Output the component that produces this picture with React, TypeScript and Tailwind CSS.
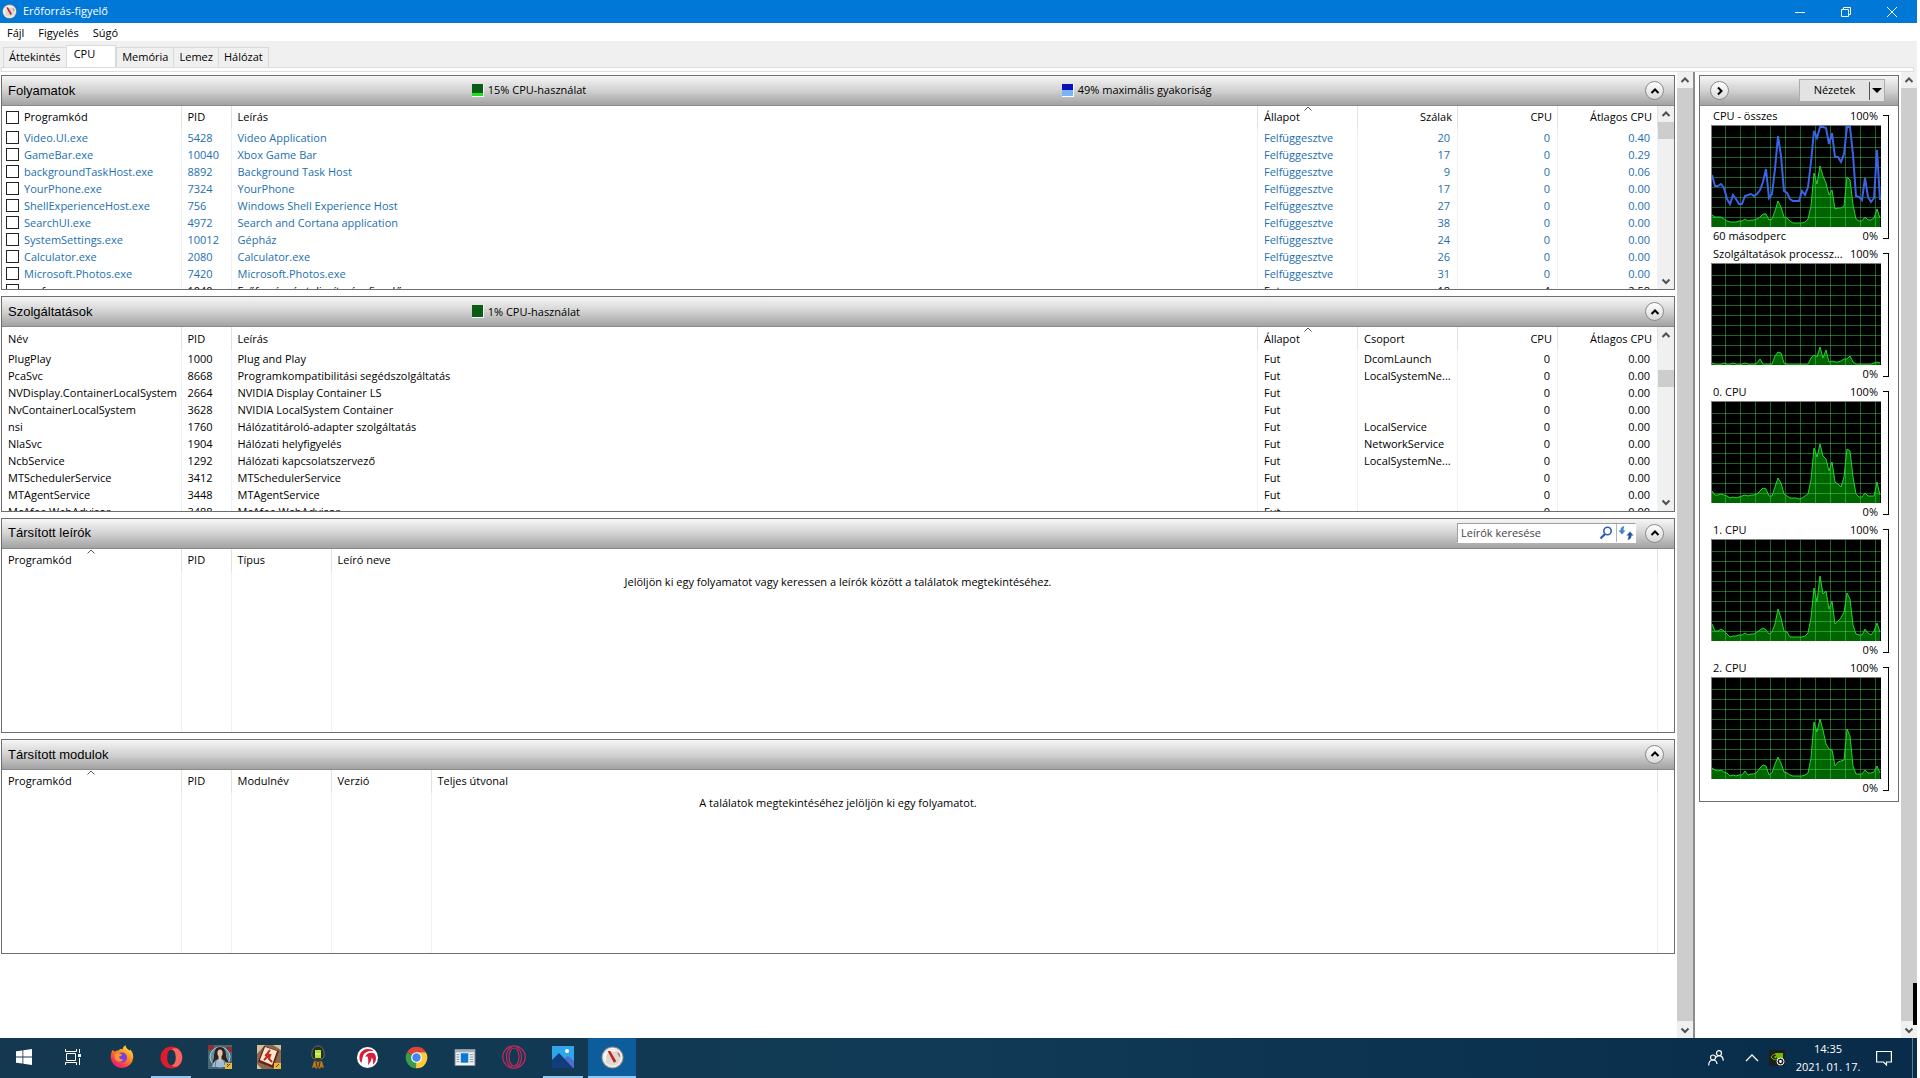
import { useState } from "react";
import type { ReactNode } from "react";
import clsx from "clsx";

type Column = {
  label: string;
  width?: string;
  right?: boolean;
  sorted?: boolean;
};

const PROCESS_COLUMNS: Column[] = [
  { label: "Programkód", width: "w-[179px]" },
  { label: "PID", width: "w-[50px]" },
  { label: "Leírás" },
  { label: "Állapot", width: "w-[100px]", sorted: true },
  { label: "Szálak", width: "w-[100px]", right: true },
  { label: "CPU", width: "w-[100px]", right: true },
  { label: "Átlagos CPU", width: "w-[100px]", right: true },
];

const PROCESSES = [
  ["Video.UI.exe", "5428", "Video Application", "Felfüggesztve", "20", "0", "0.40"],
  ["GameBar.exe", "10040", "Xbox Game Bar", "Felfüggesztve", "17", "0", "0.29"],
  ["backgroundTaskHost.exe", "8892", "Background Task Host", "Felfüggesztve", "9", "0", "0.06"],
  ["YourPhone.exe", "7324", "YourPhone", "Felfüggesztve", "17", "0", "0.00"],
  ["ShellExperienceHost.exe", "756", "Windows Shell Experience Host", "Felfüggesztve", "27", "0", "0.00"],
  ["SearchUI.exe", "4972", "Search and Cortana application", "Felfüggesztve", "38", "0", "0.00"],
  ["SystemSettings.exe", "10012", "Gépház", "Felfüggesztve", "24", "0", "0.00"],
  ["Calculator.exe", "2080", "Calculator.exe", "Felfüggesztve", "26", "0", "0.00"],
  ["Microsoft.Photos.exe", "7420", "Microsoft.Photos.exe", "Felfüggesztve", "31", "0", "0.00"],
  ["perfmon.exe", "1040", "Erőforrás- és teljesítményfigyelő", "Fut", "18", "4", "2.58"],
];

const SERVICE_COLUMNS: Column[] = [
  { label: "Név", width: "w-[179px]" },
  { label: "PID", width: "w-[50px]" },
  { label: "Leírás" },
  { label: "Állapot", width: "w-[100px]", sorted: true },
  { label: "Csoport", width: "w-[100px]" },
  { label: "CPU", width: "w-[100px]", right: true },
  { label: "Átlagos CPU", width: "w-[100px]", right: true },
];

const SERVICES = [
  ["PlugPlay", "1000", "Plug and Play", "Fut", "DcomLaunch", "0", "0.00"],
  ["PcaSvc", "8668", "Programkompatibilitási segédszolgáltatás", "Fut", "LocalSystemNe...", "0", "0.00"],
  ["NVDisplay.ContainerLocalSystem", "2664", "NVIDIA Display Container LS", "Fut", "", "0", "0.00"],
  ["NvContainerLocalSystem", "3628", "NVIDIA LocalSystem Container", "Fut", "", "0", "0.00"],
  ["nsi", "1760", "Hálózatitároló-adapter szolgáltatás", "Fut", "LocalService", "0", "0.00"],
  ["NlaSvc", "1904", "Hálózati helyfigyelés", "Fut", "NetworkService", "0", "0.00"],
  ["NcbService", "1292", "Hálózati kapcsolatszervező", "Fut", "LocalSystemNe...", "0", "0.00"],
  ["MTSchedulerService", "3412", "MTSchedulerService", "Fut", "", "0", "0.00"],
  ["MTAgentService", "3448", "MTAgentService", "Fut", "", "0", "0.00"],
  ["McAfee WebAdvisor", "3488", "McAfee WebAdvisor", "Fut", "", "0", "0.00"],
];

const HANDLE_COLUMNS: Column[] = [
  { label: "Programkód", width: "w-[179px]", sorted: true },
  { label: "PID", width: "w-[50px]" },
  { label: "Típus", width: "w-[100px]" },
  { label: "Leíró neve" },
];

const MODULE_COLUMNS: Column[] = [
  { label: "Programkód", width: "w-[179px]", sorted: true },
  { label: "PID", width: "w-[50px]" },
  { label: "Modulnév", width: "w-[100px]" },
  { label: "Verzió", width: "w-[100px]" },
  { label: "Teljes útvonal" },
];

// One sample per second, in percent
const FREQUENCY = [
  51, 40, 40, 42, 38, 27, 22, 31, 27, 22, 22, 30, 31, 32, 30, 32, 36, 44, 57, 28, 32, 57, 90, 70, 35, 33, 27, 25, 25,
  25, 35, 31, 39, 64, 95, 88, 99, 99, 98, 82, 93, 69, 69, 64, 72, 99, 99, 71, 30, 29, 26, 48, 29, 24, 28, 76, 26,
];
const TOTAL = [
  11, 9, 9, 9, 7, 5, 4, 4, 4, 5, 5, 7, 5, 6, 6, 7, 9, 12, 12, 6, 7, 15, 25, 19, 9, 8, 5, 3, 3, 3, 3, 4, 7, 20, 53, 42,
  60, 50, 43, 31, 36, 17, 18, 18, 20, 49, 46, 21, 7, 5, 5, 9, 6, 6, 8, 17, 8,
];
const SERVICE_LOAD = [
  1, 0, 0, 0, 1, 0, 0, 1, 0, 0, 0, 1, 0, 0, 0, 1, 5, 0, 0, 0, 0, 8, 12, 11, 1, 0, 0, 0, 0, 0, 0, 0, 0, 6, 9, 7, 17, 6,
  14, 2, 3, 2, 2, 3, 5, 5, 8, 2, 0, 0, 0, 0, 0, 0, 1, 2, 1,
];
const CPU0 = [
  11, 7, 7, 8, 7, 6, 4, 5, 4, 5, 6, 7, 6, 7, 7, 8, 11, 14, 13, 6, 6, 15, 24, 19, 8, 6, 4, 4, 4, 3, 4, 6, 8, 22, 54, 45,
  58, 46, 43, 31, 40, 20, 18, 15, 25, 53, 51, 25, 8, 5, 5, 9, 6, 6, 6, 20, 7,
];
const CPU1 = [
  16, 9, 9, 11, 9, 6, 3, 4, 4, 5, 5, 7, 5, 6, 6, 8, 10, 12, 10, 6, 8, 16, 31, 22, 9, 8, 3, 3, 3, 3, 3, 4, 7, 22, 52,
  38, 64, 46, 49, 31, 39, 16, 19, 22, 28, 47, 41, 15, 6, 5, 5, 11, 7, 5, 9, 17, 8,
];
const CPU2 = [
  10, 8, 7, 8, 6, 5, 2, 3, 2, 3, 3, 7, 3, 4, 4, 6, 10, 13, 12, 3, 5, 14, 21, 15, 6, 5, 3, 2, 2, 2, 2, 3, 5, 20, 56, 46,
  59, 48, 34, 29, 28, 12, 16, 17, 18, 49, 42, 12, 4, 4, 4, 8, 5, 5, 6, 12, 5,
];

const GRAPHS = [
  { title: "CPU - összes", footer: "60 másodperc", usage: TOTAL, frequency: FREQUENCY },
  { title: "Szolgáltatások processz...", footer: "", usage: SERVICE_LOAD },
  { title: "0. CPU", footer: "", usage: CPU0 },
  { title: "1. CPU", footer: "", usage: CPU1 },
  { title: "2. CPU", footer: "", usage: CPU2 },
];

function Gauge({ className }: { className: string }) {
  return (
    <svg viewBox="0 0 24 24" className={className} aria-hidden="true">
      <circle cx="12" cy="12" r="11.5" fill="#8d8a86" />
      <circle cx="12" cy="12" r="10.5" fill="#f1efec" />
      <circle cx="12" cy="12" r="8.5" fill="#ddd8d2" />
      <path d="M5 15a7.300 7.300 0 0 1 10-9.500" fill="none" stroke="#fff" strokeWidth="1.500" />
      <path d="M17.500 7a7.300 7.300 0 0 1 2 4" fill="none" stroke="#c0694f" strokeWidth="1.500" />
      <path d="M7 5.500 9.500 5l6.500 11-2.500 1.500z" fill="#c4201c" />
    </svg>
  );
}

function Chevron({ dir, className }: { dir: "up" | "down" | "right"; className?: string }) {
  const d = { up: "M1.500 7 5 3.500 8.500 7", down: "M1.500 3.500 5 7l3.500-3.500", right: "M3 1.500 6.500 5 3 8.500" }[dir];
  return (
    <svg viewBox="0 0 10 10" className={clsx("h-[10px] w-[10px]", className)} aria-hidden="true">
      <path d={d} fill="none" stroke="currentColor" strokeWidth="2" />
    </svg>
  );
}

function RoundButton({ dir, label }: { dir: "up" | "right"; label: string }) {
  return (
    <button
      aria-label={label}
      className="flex h-[19px] w-[19px] shrink-0 items-center justify-center rounded-full border border-[#8a8a8a] bg-gradient-to-b from-white to-[#d9d9d9] text-black"
    >
      <Chevron dir={dir} />
    </button>
  );
}

function ScrollBar({ thumb }: { thumb: string }) {
  return (
    <div className="flex w-4 shrink-0 flex-col bg-[#f0f0f0] text-[#505050]">
      <button aria-label="Görgetés fel" className="flex h-4 shrink-0 items-center justify-center">
        <Chevron dir="up" />
      </button>
      <div className="flex min-h-0 flex-1 flex-col">
        <div className={clsx("bg-[#cdcdcd]", thumb)} />
      </div>
      <button aria-label="Görgetés le" className="flex h-[17px] shrink-0 items-center justify-center">
        <Chevron dir="down" />
      </button>
    </div>
  );
}

function Panel({ title, header, children }: { title: string; header?: ReactNode; children: ReactNode }) {
  return (
    <section className="flex min-h-0 flex-1 flex-col border border-[#6e6e6e] bg-white">
      <div className="flex h-[30px] shrink-0 items-center border-b border-[#8a8a8a] bg-gradient-to-b from-[#f6f6f6] via-[#d2d2d2] to-[#a2a2a2] pr-[10px] pl-[6px]">
        <h2 className="w-[28%] shrink-0 font-['Liberation_Sans',sans-serif] text-[13px]">{title}</h2>
        <div className="flex min-w-0 flex-1 items-center">{header}</div>
        <RoundButton dir="up" label="Összecsukás" />
      </div>
      <div className="relative flex min-h-0 flex-1 overflow-hidden">{children}</div>
    </section>
  );
}

function Legend({ swatch, fill, children }: { swatch: string; fill: string; children: ReactNode }) {
  return (
    <div className="flex w-[590px] shrink-0 items-center gap-1">
      <span className={clsx("flex h-[13px] w-[12px] flex-col justify-end border-r border-b border-white", swatch)}>
        <span className={fill} />
      </span>
      {children}
    </div>
  );
}

function HeadCell({ column, children }: { column: Column; children?: ReactNode }) {
  return (
    <th
      className={clsx(
        "relative h-[23px] border-r border-[#e2e2e2] pr-[5px] pl-[6px] font-normal whitespace-nowrap",
        column.right ? "text-right" : "text-left",
        column.width,
      )}
    >
      {column.sorted && (
        <svg viewBox="0 0 8 5" className="absolute top-0 left-1/2 h-[5px] w-2 -translate-x-1/2" aria-hidden="true">
          <path d="M.5 4.500 4 1l3.500 3.500" fill="none" stroke="#555" />
        </svg>
      )}
      <span className="flex items-center gap-[5px]">
        {children}
        <span className="flex-1">{column.label}</span>
      </span>
    </th>
  );
}

const CHECKBOX = "-ml-[2px] h-[13px] w-[13px] shrink-0 appearance-none border border-[#222] bg-white checked:bg-[#0078d7]";

function DataTable({ columns, rows, selectable }: { columns: Column[]; rows: string[][]; selectable?: boolean }) {
  return (
    <div className="min-w-0 flex-1 overflow-hidden">
      <table className="w-full table-fixed border-collapse">
        <thead>
          <tr>
            {columns.map((c, i) => (
              <HeadCell key={c.label} column={c}>
                {selectable && i === 0 && (
                  <input type="checkbox" aria-label="Összes kijelölése" className={CHECKBOX} />
                )}
              </HeadCell>
            ))}
          </tr>
        </thead>
        <tbody>
          {rows.map((row) => (
            <tr key={row[0]} className={row[3] === "Felfüggesztve" ? "text-[#1c6fb0]" : "text-black"}>
              {row.map((value, i) => (
                <td
                  key={i}
                  className={clsx(
                    "h-[17px] border-r border-[#eef1f5] pl-[6px] leading-[17px] whitespace-nowrap",
                    columns[i].right ? "pr-[7px] text-right" : "pr-0",
                  )}
                >
                  {selectable && i === 0 ? (
                    <label className="flex items-center gap-[5px]">
                      <input type="checkbox" className={CHECKBOX} />
                      {value}
                    </label>
                  ) : (
                    value
                  )}
                </td>
              ))}
            </tr>
          ))}
        </tbody>
      </table>
    </div>
  );
}

function EmptyTable({ columns, message }: { columns: Column[]; message: string }) {
  return (
    <>
      <table className="mr-4 h-full w-full table-fixed border-collapse">
        <thead>
          <tr>
            {columns.map((c) => (
              <HeadCell key={c.label} column={c} />
            ))}
          </tr>
        </thead>
        <tbody>
          <tr>
            {columns.map((c) => (
              <td key={c.label} className="border-r border-[#f0f0f0]" />
            ))}
          </tr>
        </tbody>
      </table>
      <p className="absolute inset-x-0 top-[23px] text-center leading-[20px]">{message}</p>
    </>
  );
}

function HandleSearch() {
  return (
    <div className="mr-[9px] ml-auto flex h-5 w-[179px] border border-[#a0a0a0] border-r-white border-b-white bg-white">
      <input
        type="text"
        aria-label="Leírók keresése"
        placeholder="Leírók keresése"
        className="min-w-0 flex-1 pl-[3px] text-[11px] outline-none placeholder:text-[#444]"
      />
      <button aria-label="Keresés" className="flex w-5 items-center justify-center">
        <svg viewBox="0 0 14 14" className="h-[14px] w-[14px]" fill="none" stroke="#2c62ad" aria-hidden="true">
          <circle cx="8.500" cy="5" r="3.700" strokeWidth="1.600" />
          <path d="M6 8 1.500 12.500" strokeWidth="2.400" />
        </svg>
      </button>
      <button aria-label="Frissítés" className="flex w-[19px] items-center justify-center border-l border-[#b4b4b4]">
        <svg viewBox="0 0 16 14" className="h-[14px] w-4" aria-hidden="true">
          <path d="M6.500 0C3.700.3 2.500 2 2.500 4.500H.5L4 8.500l3.500-4h-2c0-2 .3-3 1-4.500z" fill="#3f86cf" />
          <path d="M9.500 14c2.800-.3 4-2 4-4.500h2L12 5.500l-3.500 4h2c0 2-.3 3-1 4.500z" fill="#2559a6" />
        </svg>
      </button>
    </div>
  );
}

const toPoints = (samples: number[]) => samples.map((v, i) => `${i * 3},${100 - v}`).join(" ");

function Graph({ title, footer, usage, frequency }: { title: string; footer: string; usage: number[]; frequency?: number[] }) {
  return (
    <div className="flex h-[138px] gap-[2px] leading-[18px]">
      <div className="flex w-[170px] flex-col">
        <div className="flex justify-between pr-[3px] pl-[2px]">
          <span className="whitespace-nowrap">{title}</span>
          <span>100%</span>
        </div>
        <svg viewBox="0 0 169 101" className="h-[102px] w-[170px] border-t border-l border-[#808080] bg-black">
          <polygon points={`0,101 ${toPoints(usage)} 168,101`} fill="#006400" />
          <g stroke="#4dff6a" strokeOpacity="0.38" shapeRendering="crispEdges">
            {Array.from({ length: 11 }, (_, i) => (
              <line key={i} x1={13.5 + i * 15} x2={13.5 + i * 15} y1="0" y2="101" />
            ))}
            {Array.from({ length: 9 }, (_, i) => (
              <line key={i} x1="0" x2="169" y1={11.5 + i * 10} y2={11.5 + i * 10} />
            ))}
          </g>
          <polyline points={toPoints(usage)} fill="none" stroke="#22d62a" />
          {frequency && <polyline points={toPoints(frequency)} fill="none" stroke="#3a63e8" strokeWidth="2" />}
        </svg>
        <div className="flex justify-between pr-[3px] pl-[2px]">
          <span>{footer}</span>
          <span>0%</span>
        </div>
      </div>
      <div className="mt-2 mb-[6px] w-[6px] border border-l-0 border-black" />
    </div>
  );
}

function Sidebar() {
  return (
    <aside className="w-[200px] shrink-0 self-start border border-[#6e6e6e] bg-white pb-[4px]">
      <div className="flex h-[30px] items-center border-b border-[#8a8a8a] bg-gradient-to-b from-[#f6f6f6] via-[#d2d2d2] to-[#a2a2a2] pr-[13px] pl-[10px]">
        <RoundButton dir="right" label="Grafikonok elrejtése" />
        <button className="ml-auto flex h-[23px] w-[86px] items-center border border-[#adadad] bg-[#e3e3e3]">
          <span className="flex-1 text-center">Nézetek</span>
          <span className="flex h-[18px] w-[15px] items-center justify-center border-l border-[#555]">
            <svg viewBox="0 0 10 5" className="h-[5px] w-[10px]" aria-hidden="true">
              <path d="M0 0h10L5 5z" />
            </svg>
          </span>
        </button>
      </div>
      <div className="pt-px pl-[11px]">
        {GRAPHS.map((g) => (
          <Graph key={g.title} {...g} />
        ))}
      </div>
    </aside>
  );
}

const TABS = ["Áttekintés", "CPU", "Memória", "Lemez", "Hálózat"];

function Tabs() {
  const [active, setActive] = useState("CPU");
  return (
    <div className="h-[31px] shrink-0 bg-[#f0f0f0] pt-[4px]">
      <div role="tablist" className="flex h-[22px] items-end pl-[3px]">
        {TABS.map((tab) => (
          <button
            key={tab}
            role="tab"
            aria-selected={tab === active}
            onClick={() => setActive(tab)}
            className={clsx(
              "border border-b-0 border-[#d9d9d9]",
              tab === active ? "h-[22px] bg-white pr-[20px] pb-1 pl-[7px]" : "-mr-px h-5 bg-[#f0f0f0] px-[5px]",
            )}
          >
            {tab}
          </button>
        ))}
      </div>
      <div className="mr-[3px] ml-px h-[5px] border border-[#dcdcdc] bg-white" />
    </div>
  );
}

function FirefoxIcon() {
  return (
    <svg viewBox="0 0 24 24" className="h-6 w-6">
      <defs>
        <linearGradient id="fox" x1="0.9" y1="0" x2="0.2" y2="1">
          <stop offset="0" stopColor="#fff04a" />
          <stop offset="0.45" stopColor="#ff8a1e" />
          <stop offset="0.8" stopColor="#f5315c" />
          <stop offset="1" stopColor="#d61c8b" />
        </linearGradient>
      </defs>
      <path
        d="M2.500 5c1 .5 1.700 1 2.300 1.800C6 5.800 7 5.500 8.500 5.600 10 4 11.500 3.800 12.500 4.500 13 2.500 14 1 15.500.3c.3 2 1.200 3 3 4.500C20 6 20.300 5.500 20.300 4.500 22.600 7 23.500 10 23.200 13A11.300 11.300 0 0 1 .8 13.500C.5 10 1.200 7.500 2.500 5z"
        fill="url(#fox)"
      />
      <circle cx="12" cy="12.500" r="5" fill="#7a3fe0" />
      <path d="M5 9c3-1.500 5-.5 7 .5-.5 1.500-2 1.700-3 2 .3 2.500 2.500 3.500 4.500 2.700-1.500 3-6.500 3.300-8.300-.2C4.500 12.500 4.500 10.500 5 9z" fill="#ff9a28" />
    </svg>
  );
}

function ChromeIcon() {
  return (
    <svg viewBox="0 0 24 24" className="h-[23px] w-[23px]">
      <path d="M12 12 2.200 6.400A11.300 11.300 0 0 1 21.800 6.400H12z" fill="#e0453a" />
      <path d="M12 12 2.200 6.400A11.300 11.300 0 0 0 11.500 23.300L17 14.500z" fill="#3c9c4c" />
      <path d="M12 12V6.400h9.800A11.300 11.300 0 0 1 11.500 23.300z" fill="#fbcb3b" />
      <circle cx="12" cy="12" r="5.600" fill="#fff" />
      <circle cx="12" cy="12" r="4.400" fill="#4285f4" />
    </svg>
  );
}

const TASKS: { name: string; icon: ReactNode; state?: "running" | "active" }[] = [
  {
    name: "Start",
    icon: (
      <svg viewBox="0 0 16 16" className="h-4 w-4" fill="#fff">
        <path d="M0 2.300 6.500 1.400V7.600H0zM7.300 1.300 16 0v7.600H7.300zM0 8.400h6.500v6.200L0 13.700zM7.300 8.400H16V16l-8.700-1.300z" />
      </svg>
    ),
  },
  {
    name: "Feladatnézet",
    icon: (
      <svg viewBox="0 0 16 16" className="h-4 w-4" fill="none" stroke="#fff">
        <path d="M.5 0v2.500h11V0M.5 16v-2.500h11V16M1.500 4.500h9v7h-9zM14.500 0v4M14.500 9v7" />
        <path d="M13 6.500h3" strokeWidth="3" />
      </svg>
    ),
  },
  { name: "Firefox", icon: <FirefoxIcon /> },
  {
    name: "Opera",
    state: "running",
    icon: (
      <svg viewBox="0 0 24 24" className="h-[23px] w-[23px]">
        <path d="M12 .5a11.500 11.500 0 0 0 0 23 11.500 11.500 0 0 0 0-23zm0 3.500c3 0 4.500 3.600 4.500 8s-1.500 8-4.500 8-4.500-3.600-4.500-8S9 4 12 4z" fill="#e01b2c" />
        <path d="M12 4c2-2 5.500-2 7.500-.3A11.500 11.500 0 0 1 19.500 20.300C17.500 22 14 22 12 20c3 0 4.500-3.600 4.500-8S15 4 12 4z" fill="#f4695f" />
      </svg>
    ),
  },
  {
    name: "Játék",
    icon: (
      <svg viewBox="0 0 24 24" className="h-6 w-6">
        <path fill="#4a6672" d="M0 0h24v24H0z" />
        <path fill="#8f2e33" d="M0 0h6v5H0zM18 2h6v5h-6z" />
        <circle cx="12" cy="12" r="10" fill="#5f8fa4" stroke="#b7c9cf" />
        <path d="M6 13c0-8 2-11 6-11s6 3 6 10l3 6-5-2H8l-4 3z" fill="#2b211f" />
        <ellipse cx="12" cy="8" rx="2.600" ry="3.500" fill="#e7c1a8" />
        <path d="M4 22c1-5 4-8 8-8s6 3 7 8z" fill="#9dbdd8" />
        <path d="M10.500 11h3v3L12 18l-1.500-4z" fill="#e7c1a8" />
        <path d="M8 15 7 22M16 15l1 5" stroke="#5c7894" />
        <path fill="#e8b93a" d="M17 18h7v6h-7z" />
        <path d="m19 22 3-3M19 19.500h1" stroke="#5a3c08" />
      </svg>
    ),
  },
  {
    name: "Mahjong",
    icon: (
      <svg viewBox="0 0 24 24" className="h-6 w-6">
        <path fill="#8a6a4d" d="M0 0h24v24H0z" />
        <path fill="#d6c097" d="M0 0h8L0 9zM16 0h8v5zM0 19l5 5H0z" />
        <path fill="#6d2219" d="m7 1 15 5-6 17L1 17z" />
        <path fill="#f5ead0" d="m8 2 12 4-5 14L3 15z" />
        <path d="m13 5-3 4 3 1-4 3-2 2M13 10l-1 4 3 3M8 10l2 1" stroke="#c3241b" strokeWidth="2" fill="none" />
        <path fill="#e8b93a" d="M17 18h7v6h-7z" />
        <path d="m19 22 3-3" stroke="#5a3c08" />
      </svg>
    ),
  },
  {
    name: "Kerbal",
    icon: (
      <svg viewBox="0 0 24 24" className="h-6 w-6">
        <path d="M6 12C5 5 8 1 12 1s7 4 6 11l-2 2H8z" fill="#252c22" stroke="#6b7065" />
        <path d="M9 5h6v8H9z" fill="#b8e23a" />
        <path d="M9 9h6" stroke="#e8ffa0" />
        <path d="M10 13h4v4h-4z" fill="#3c3a2c" />
        <path d="m8 16 4 1 4-1 2 7-3-1-1 2-2-2-2 2-1-2-3 1z" fill="#b8781d" />
        <path d="m10 17 1 5M14 17l-1 5" stroke="#4a2a08" />
      </svg>
    ),
  },
  {
    name: "Tűzfal",
    icon: (
      <svg viewBox="0 0 24 24" className="h-[23px] w-[23px]">
        <circle cx="12" cy="12" r="11" fill="#fff" />
        <path d="M5.500 18C1.500 12 4 4 11.500 3.200c3-.3 5.500.6 7 2.300C14 4.500 9 6 7.500 10c-1 2.600-1 5.500-2 8z" fill="#d61f3c" />
        <path d="M9.500 11.500C11 7.500 15.500 6 19.500 8c2.500 4 1.500 9-2 11.500.8-3 .5-5.500-1-7.500-.5 3-1.500 5.500-4 8 .5-3.500.5-6-.5-9-1 0-1.700 0-2.500.5z" fill="#d61f3c" />
      </svg>
    ),
  },
  { name: "Chrome", icon: <ChromeIcon /> },
  {
    name: "Hírek",
    icon: (
      <svg viewBox="0 0 22 18" className="h-[17px] w-[22px]">
        <path fill="#f4f4f4" stroke="#8a97a0" d="M.5.5h21v17H.5z" />
        <path fill="#9fb0bb" d="M1 1h20v2.500H1z" />
        <path fill="#0a78d7" d="M6.500 4.500h8v10h-8z" />
        <path d="M2 6h3M2 8.500h3M2 11h3M2 13.500h3M16 6h4M16 8.500h4M16 11h4M16 13.500h4" stroke="#7d8b94" />
      </svg>
    ),
  },
  {
    name: "Opera GX",
    icon: (
      <svg viewBox="0 0 24 24" className="h-6 w-6" fill="none" stroke="#c42a5c" strokeWidth="1.200">
        <circle cx="12" cy="12" r="11.200" />
        <ellipse cx="12" cy="12" rx="5" ry="9" />
        <path d="M10 1.500C5.500 4 4.500 8 4.500 12s1 8 5.500 10.500M14 1.500c4.500 2.500 5.500 6.500 5.500 10.500s-1 8-5.500 10.500" />
      </svg>
    ),
  },
  {
    name: "Fényképek",
    state: "running",
    icon: (
      <svg viewBox="0 0 22 22" className="h-[22px] w-[22px]">
        <path fill="#2fa5ea" d="M0 0h22v22H0z" />
        <path fill="#4f6fce" d="m9 15 7-5 6 5v7H9z" />
        <path fill="#123d7c" d="m0 14 7-7 14 15H0z" />
        <circle cx="15" cy="5" r="2" fill="#fff" />
      </svg>
    ),
  },
  { name: "Erőforrás-figyelő", state: "active", icon: <Gauge className="h-[23px] w-[23px]" /> },
];

function Taskbar() {
  return (
    <footer className="flex h-10 shrink-0 bg-gradient-to-r from-[#14384f] via-[#103a56] to-[#082c49] text-white">
      <nav className="flex gap-px">
        {TASKS.map((task) => (
          <button
            key={task.name}
            aria-label={task.name}
            className={clsx("flex w-12 flex-col items-center", task.state === "active" && "bg-[#0d5c9c]")}
          >
            <span className="flex h-[38px] items-center">{task.icon}</span>
            {task.state && (
              <span className={clsx("h-[2px] bg-[#8fc6f2]", task.state === "active" ? "w-full" : "w-10")} />
            )}
          </button>
        ))}
      </nav>
      <div className="ml-auto flex items-center">
        <button aria-label="Kapcsolatok" className="mr-[21px]">
          <svg viewBox="0 0 16 16" className="h-4 w-4" fill="none" stroke="#fff" strokeWidth="1.200">
            <circle cx="5" cy="7.500" r="2.500" />
            <path d="M.7 15.500c0-3.500 1.800-5.500 4.300-5.500s3.800 1.500 4 4" />
            <circle cx="11" cy="3.200" r="2.500" />
            <path d="M8 7.500c.8-1.200 1.700-1.800 3-1.800 2.500 0 4.200 1.800 4.200 5" />
          </svg>
        </button>
        <button aria-label="Rejtett ikonok" className="mr-[10px]">
          <svg viewBox="0 0 14 8" className="h-2 w-[14px]" fill="none" stroke="#fff" strokeWidth="1.300">
            <path d="m1 7 6-6 6 6" />
          </svg>
        </button>
        <button aria-label="NVIDIA" className="mr-[10px]">
          <svg viewBox="0 0 16 16" className="h-4 w-4">
            <path fill="#1d1f1d" d="M0 0h16v16H0z" />
            <path fill="#76b900" d="M6 3h8v8H9z" />
            <path d="M2 7c2.500-4 7-4 9 0-2.500 3.500-6.500 3.500-9 0z" fill="none" stroke="#76b900" />
            <circle cx="6.500" cy="7" r="1.200" fill="#76b900" />
            <circle cx="11.500" cy="11.500" r="3.500" fill="#1d1f1d" stroke="#fff" />
            <circle cx="11.500" cy="11.500" r="1.400" fill="#fff" />
          </svg>
        </button>
        <time className="w-[66px] text-center text-[11px] leading-[18px] whitespace-nowrap">
          14:35
          <br />
          2021. 01. 17.
        </time>
        <button aria-label="Műveletközpont" className="mr-[20px] ml-[15px]">
          <svg viewBox="0 0 16 16" className="h-4 w-4" fill="none" stroke="#fff" strokeWidth="1.200">
            <path d="M.6 1.500h14.800v10.500H10.500V15L7.500 12H.6z" />
          </svg>
        </button>
        <span className="mr-1 h-10 w-px bg-[#5f7d92]" />
      </div>
    </footer>
  );
}

export default function App() {
  return (
    <div className="flex h-screen flex-col overflow-hidden bg-white pr-[3px] font-['Open_Sans','Noto_Sans',sans-serif] text-[11px] text-black">
      <header className="flex h-[23px] shrink-0 items-center bg-[#0078d7] pr-[2px] pl-[2px] text-white">
        <Gauge className="mr-[6px] h-[15px] w-[15px]" />
        <h1>Erőforrás-figyelő</h1>
        <div className="ml-auto flex">
          <button aria-label="Kis méret" className="flex h-[21px] w-[46px] items-center justify-center">
            <svg viewBox="0 0 10 10" className="h-[10px] w-[10px]" stroke="#fff">
              <path d="M0 5.500h10" />
            </svg>
          </button>
          <button aria-label="Előző méret" className="flex h-[21px] w-[46px] items-center justify-center">
            <svg viewBox="0 0 10 10" className="h-[10px] w-[10px]" fill="none" stroke="#fff">
              <path d="M.5 2.500h7v7h-7zM2.500 2.500v-2h7v7h-2" />
            </svg>
          </button>
          <button aria-label="Bezárás" className="flex h-[21px] w-[46px] items-center justify-center">
            <svg viewBox="0 0 10 10" className="h-[10px] w-[10px]" stroke="#fff">
              <path d="m0 0 10 10M10 0 0 10" />
            </svg>
          </button>
        </div>
      </header>
      <nav className="flex h-[18px] shrink-0 items-center gap-[14px] pt-[2px] pl-[7px]">
        <button>Fájl</button>
        <button>Figyelés</button>
        <button>Súgó</button>
      </nav>
      <Tabs />

      <div className="flex min-h-0 flex-1">
        <main className="min-w-0 flex-1 pt-[3px] pr-[2px] pl-px">
          <div className="flex h-[879px] flex-col gap-[6px]">
            <Panel
              title="Folyamatok"
              header={
                <>
                  <Legend swatch="bg-[#0b5c14]" fill="h-[3px] bg-[#1fe01f]">
                    15% CPU-használat
                  </Legend>
                  <Legend swatch="bg-[#0a10b8]" fill="h-[6px] bg-[#78b4f8]">
                    49% maximális gyakoriság
                  </Legend>
                </>
              }
            >
              <DataTable columns={PROCESS_COLUMNS} rows={PROCESSES} selectable />
              <ScrollBar thumb="h-[17px]" />
            </Panel>
            <Panel
              title="Szolgáltatások"
              header={
                <Legend swatch="bg-[#0b5c14]" fill="h-0">
                  1% CPU-használat
                </Legend>
              }
            >
              <DataTable columns={SERVICE_COLUMNS} rows={SERVICES} />
              <ScrollBar thumb="mt-[27px] h-[17px]" />
            </Panel>
            <Panel title="Társított leírók" header={<HandleSearch />}>
              <EmptyTable
                columns={HANDLE_COLUMNS}
                message="Jelöljön ki egy folyamatot vagy keressen a leírók között a találatok megtekintéséhez."
              />
            </Panel>
            <Panel title="Társított modulok">
              <EmptyTable columns={MODULE_COLUMNS} message="A találatok megtekintéséhez jelöljön ki egy folyamatot." />
            </Panel>
          </div>
        </main>
        <ScrollBar thumb="flex-1" />
        <div className="flex shrink-0 gap-[2px] border-l-2 border-[#8c8c8c] pl-[4px]">
          <div className="pt-[3px]">
            <Sidebar />
          </div>
          <div className="relative flex">
            <ScrollBar thumb="flex-1" />
            <div className="absolute right-0 bottom-[13px] h-[42px] w-1 bg-black" />
          </div>
        </div>
      </div>
      <Taskbar />
    </div>
  );
}
